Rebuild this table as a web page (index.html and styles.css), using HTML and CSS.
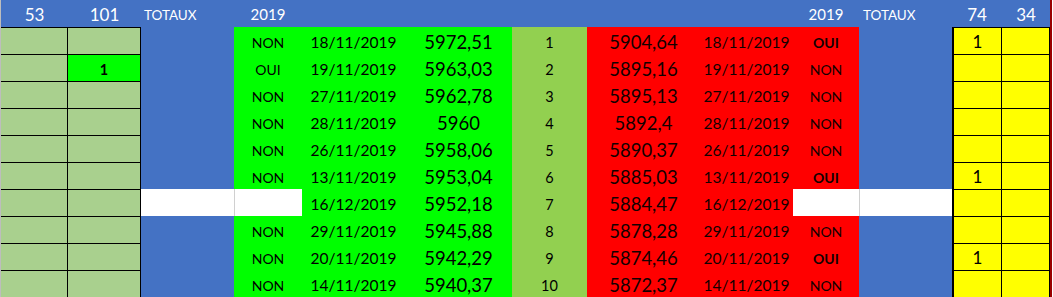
FILE: index.html
```html
<!DOCTYPE html>
<html lang="fr">
<head>
<meta charset="utf-8">
<title>Totaux 2019</title>
<link rel="stylesheet" href="styles.css">
</head>
<body>
<div class="sheet">
  <!-- header -->
  <div class="c h big">53</div>
  <div class="c h big">101</div>
  <div class="c h tot">TOTAUX</div>
  <div class="c h yr">2019</div>
  <div class="c h"></div>
  <div class="c h"></div>
  <div class="c h"></div>
  <div class="c h"></div>
  <div class="c h"></div>
  <div class="c h yr">2019</div>
  <div class="c h tot tot2">TOTAUX</div>
  <div class="c h big">74</div>
  <div class="c h big">34</div>

  <!-- row 1 -->
  <div class="c pg"></div><div class="c pg"></div><div class="c bl"></div>
  <div class="c g on">NON</div><div class="c g d">18/11/2019</div><div class="c g v">5972,51</div>
  <div class="c lg n">1</div>
  <div class="c r v">5904,64</div><div class="c r d">18/11/2019</div><div class="c r on b">OUI</div>
  <div class="c bl"></div><div class="c y y1 yn">1</div><div class="c y"></div>

  <!-- row 2 -->
  <div class="c pg"></div><div class="c pg hot n b">1</div><div class="c bl"></div>
  <div class="c g on">OUI</div><div class="c g d">19/11/2019</div><div class="c g v">5963,03</div>
  <div class="c lg n">2</div>
  <div class="c r v">5895,16</div><div class="c r d">19/11/2019</div><div class="c r on">NON</div>
  <div class="c bl"></div><div class="c y y1"></div><div class="c y"></div>

  <!-- row 3 -->
  <div class="c pg"></div><div class="c pg"></div><div class="c bl"></div>
  <div class="c g on">NON</div><div class="c g d">27/11/2019</div><div class="c g v">5962,78</div>
  <div class="c lg n">3</div>
  <div class="c r v">5895,13</div><div class="c r d">27/11/2019</div><div class="c r on">NON</div>
  <div class="c bl"></div><div class="c y y1"></div><div class="c y"></div>

  <!-- row 4 -->
  <div class="c pg"></div><div class="c pg"></div><div class="c bl"></div>
  <div class="c g on">NON</div><div class="c g d">28/11/2019</div><div class="c g v">5960</div>
  <div class="c lg n">4</div>
  <div class="c r v">5892,4</div><div class="c r d">28/11/2019</div><div class="c r on">NON</div>
  <div class="c bl"></div><div class="c y y1"></div><div class="c y"></div>

  <!-- row 5 -->
  <div class="c pg"></div><div class="c pg"></div><div class="c bl"></div>
  <div class="c g on">NON</div><div class="c g d">26/11/2019</div><div class="c g v">5958,06</div>
  <div class="c lg n">5</div>
  <div class="c r v">5890,37</div><div class="c r d">26/11/2019</div><div class="c r on">NON</div>
  <div class="c bl"></div><div class="c y y1"></div><div class="c y"></div>

  <!-- row 6 -->
  <div class="c pg"></div><div class="c pg"></div><div class="c bl"></div>
  <div class="c g on">NON</div><div class="c g d">13/11/2019</div><div class="c g v">5953,04</div>
  <div class="c lg n">6</div>
  <div class="c r v">5885,03</div><div class="c r d">13/11/2019</div><div class="c r on b">OUI</div>
  <div class="c bl"></div><div class="c y y1 yn">1</div><div class="c y"></div>

  <!-- row 7 -->
  <div class="c pg"></div><div class="c pg"></div><div class="c w"></div>
  <div class="c w wl"></div><div class="c g d">16/12/2019</div><div class="c g v">5952,18</div>
  <div class="c lg n">7</div>
  <div class="c r v">5884,47</div><div class="c r d">16/12/2019</div><div class="c w"></div>
  <div class="c w wl"></div><div class="c y y1"></div><div class="c y"></div>

  <!-- row 8 -->
  <div class="c pg"></div><div class="c pg"></div><div class="c bl"></div>
  <div class="c g on">NON</div><div class="c g d">29/11/2019</div><div class="c g v">5945,88</div>
  <div class="c lg n">8</div>
  <div class="c r v">5878,28</div><div class="c r d">29/11/2019</div><div class="c r on">NON</div>
  <div class="c bl"></div><div class="c y y1"></div><div class="c y"></div>

  <!-- row 9 -->
  <div class="c pg"></div><div class="c pg"></div><div class="c bl"></div>
  <div class="c g on">NON</div><div class="c g d">20/11/2019</div><div class="c g v">5942,29</div>
  <div class="c lg n">9</div>
  <div class="c r v">5874,46</div><div class="c r d">20/11/2019</div><div class="c r on b">OUI</div>
  <div class="c bl"></div><div class="c y y1 yn">1</div><div class="c y"></div>

  <!-- row 10 -->
  <div class="c pg"></div><div class="c pg"></div><div class="c bl"></div>
  <div class="c g on">NON</div><div class="c g d">14/11/2019</div><div class="c g v">5940,37</div>
  <div class="c lg n">10</div>
  <div class="c r v">5872,37</div><div class="c r d">14/11/2019</div><div class="c r on">NON</div>
  <div class="c bl"></div><div class="c y y1"></div><div class="c y"></div>
</div>
</body>
</html>
```

FILE: styles.css
```css
html, body {
  margin: 0;
  padding: 0;
  background: #ffffff;
}

body {
  font-family: Lato, "Liberation Sans", sans-serif;
  color: #000;
}

.sheet {
  display: grid;
  grid-template-columns: 67px 73px 93px 68px 103px 107px 75px 113px 93px 66px 93px 50px 48px;
  grid-auto-rows: 27px;
  width: max-content;
  border-left: 1px solid #bdbdbd;
  border-right: 2px solid #9a0000;
  height: 297px;
  overflow: hidden;
}

.c {
  box-sizing: border-box;
  display: flex;
  align-items: flex-end;
  justify-content: center;
  padding-bottom: 4px;
  line-height: 1;
  white-space: nowrap;
  overflow: hidden;
}

/* header */
.h {
  background: #4472c4;
  color: #ffffff;
}
.big { font-size: 17px; padding-bottom: 4px; }
.tot {
  font-size: 13.5px;
  justify-content: flex-start;
  padding-left: 3px;
  padding-bottom: 5px;
}
.tot2 { padding-left: 4px; }
.yr { font-size: 15px; padding-bottom: 5px; }

/* body fills */
.pg {
  background: #a9d08e;
  border-top: 1px solid #000;
  border-right: 1px solid #000;
}
.hot { background: #00ff00; }
.bl { background: #4472c4; }
.g { background: #00ff00; }
.lg { background: #92d050; }
.r { background: #ff0000; color: #120000; }
.w { background: #ffffff; }
.wl { border-left: 1px solid #d0d0d0; }
.y {
  background: #ffff00;
  border-top: 1px solid #000;
  border-right: 1px solid #000;
}
.y1 { border-left: 2px solid #000; }

/* text sizes */
.on { font-size: 14px; }
.d { font-size: 15.5px; }
.v { font-size: 18.5px; padding-bottom: 3px; }
.n { font-size: 14.5px; }
.yn { font-size: 17px; padding-bottom: 4px; }
.b { font-weight: 700; }
```
